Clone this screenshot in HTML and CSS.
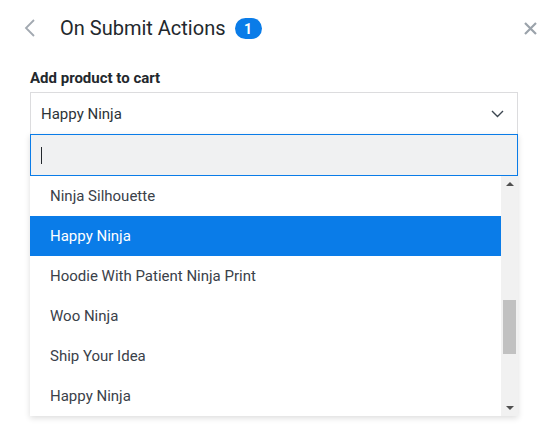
FILE: index.html
```html
<!DOCTYPE html>
<html>
<head>
<meta charset="utf-8">
<link rel="stylesheet" href="styles.css">
</head>
<body>
<div class="panel">
  <header class="head">
    <button class="back" aria-label="Back">
      <svg width="12" height="18" viewBox="0 0 12 18"><path d="M10 1 L2 9 L10 17" fill="none" stroke="#a2a9b1" stroke-width="1.8"/></svg>
    </button>
    <h1 class="title">On Submit Actions</h1>
    <span class="badge">1</span>
    <button class="close" aria-label="Close">
      <svg width="13" height="13" viewBox="0 0 13 13"><path d="M1 1 L12 12 M12 1 L1 12" fill="none" stroke="#9ba3ab" stroke-width="2.2"/></svg>
    </button>
  </header>
  <div class="body">
    <label class="label">Add product to cart</label>
    <div class="field">
      <div class="select">
        <span>Happy Ninja</span>
        <svg class="chev" width="13" height="8" viewBox="0 0 13 8"><path d="M1 1 L6.5 6.5 L12 1" fill="none" stroke="#3c4650" stroke-width="1.4"/></svg>
      </div>
      <div class="dropdown">
        <div class="search"><span class="caret"></span></div>
        <div class="listwrap">
          <ul class="list">
            <li>Ninja Silhouette</li>
            <li class="active">Happy Ninja</li>
            <li>Hoodie With Patient Ninja Print</li>
            <li>Woo Ninja</li>
            <li>Ship Your Idea</li>
            <li>Happy Ninja</li>
          </ul>
          <div class="scrollbar">
            <span class="arrow up"></span>
            <div class="track"><div class="thumb"></div></div>
            <span class="arrow down"></span>
          </div>
        </div>
      </div>
    </div>
  </div>
</div>
</body>
</html>
```
FILE: styles.css
```css
* { box-sizing: border-box; }
html, body { margin: 0; padding: 0; background: #fff; }
body {
  font-family: Roboto, "Liberation Sans", Arial, sans-serif;
  color: #23282d;
  width: 558px;
  height: 435px;
  overflow: hidden;
}
.head {
  display: flex;
  align-items: center;
  height: 56px;
  padding: 0 21px 0 24px;
}
.back, .close {
  border: 0;
  background: none;
  padding: 0;
  display: flex;
  cursor: pointer;
}
.back { margin-right: 24px; }
.title {
  margin: 0;
  font-size: 20px;
  font-weight: 400;
  color: #23282d;
  letter-spacing: 0;
}
.badge {
  margin-left: 9px;
  background: #0a7ce8;
  color: #fff;
  font-size: 14px;
  font-weight: 700;
  height: 21px;
  min-width: 27px;
  border-radius: 11px;
  display: flex;
  align-items: center;
  justify-content: center;
  margin-top: 1px;
}
.close { margin-left: auto; margin-top: 0; }
.body { padding: 13px 40px 0 30px; }
.label {
  display: block;
  font-size: 15px;
  font-weight: 700;
  line-height: 19px;
  margin-bottom: 4px;
  color: #23282d;
}
.field { position: relative; }
.select {
  height: 42px;
  border: 1px solid #dcdcde;
  border-bottom: 0;
  display: flex;
  align-items: center;
  justify-content: space-between;
  padding: 0 13px 0 10px;
  font-size: 15px;
  color: #2c3338;
}
.dropdown {
  position: absolute;
  left: 0;
  right: 0;
  top: 42px;
  background: #fff;
  box-shadow: 0 2px 6px rgba(0,0,0,0.14);
}
.search {
  height: 42px;
  border: 1px solid #0a7ce8;
  background: #f0f1f2;
  display: flex;
  align-items: center;
  padding-left: 10px;
}
.caret {
  width: 1px;
  height: 17px;
  background: #23282d;
}
.listwrap {
  display: flex;
  height: 240px;
}
.list {
  flex: 1;
  list-style: none;
  margin: 0;
  padding: 0;
}
.list li {
  height: 40px;
  display: flex;
  align-items: center;
  padding-left: 20px;
  font-size: 15px;
  color: #3a4149;
}
.list li.active {
  background: #0a7ce8;
  color: #fff;
}
.scrollbar {
  width: 17px;
  background: #f1f1f1;
  display: flex;
  flex-direction: column;
  align-items: center;
}
.arrow {
  width: 0;
  height: 0;
  border-left: 4px solid transparent;
  border-right: 4px solid transparent;
  margin: 6px 0;
}
.arrow.up { border-bottom: 4px solid #505050; }
.arrow.down { border-top: 4px solid #505050; }
.track {
  flex: 1;
  width: 100%;
  padding: 108px 2px 0;
}
.thumb {
  height: 54px;
  background: #c1c1c1;
}
```
